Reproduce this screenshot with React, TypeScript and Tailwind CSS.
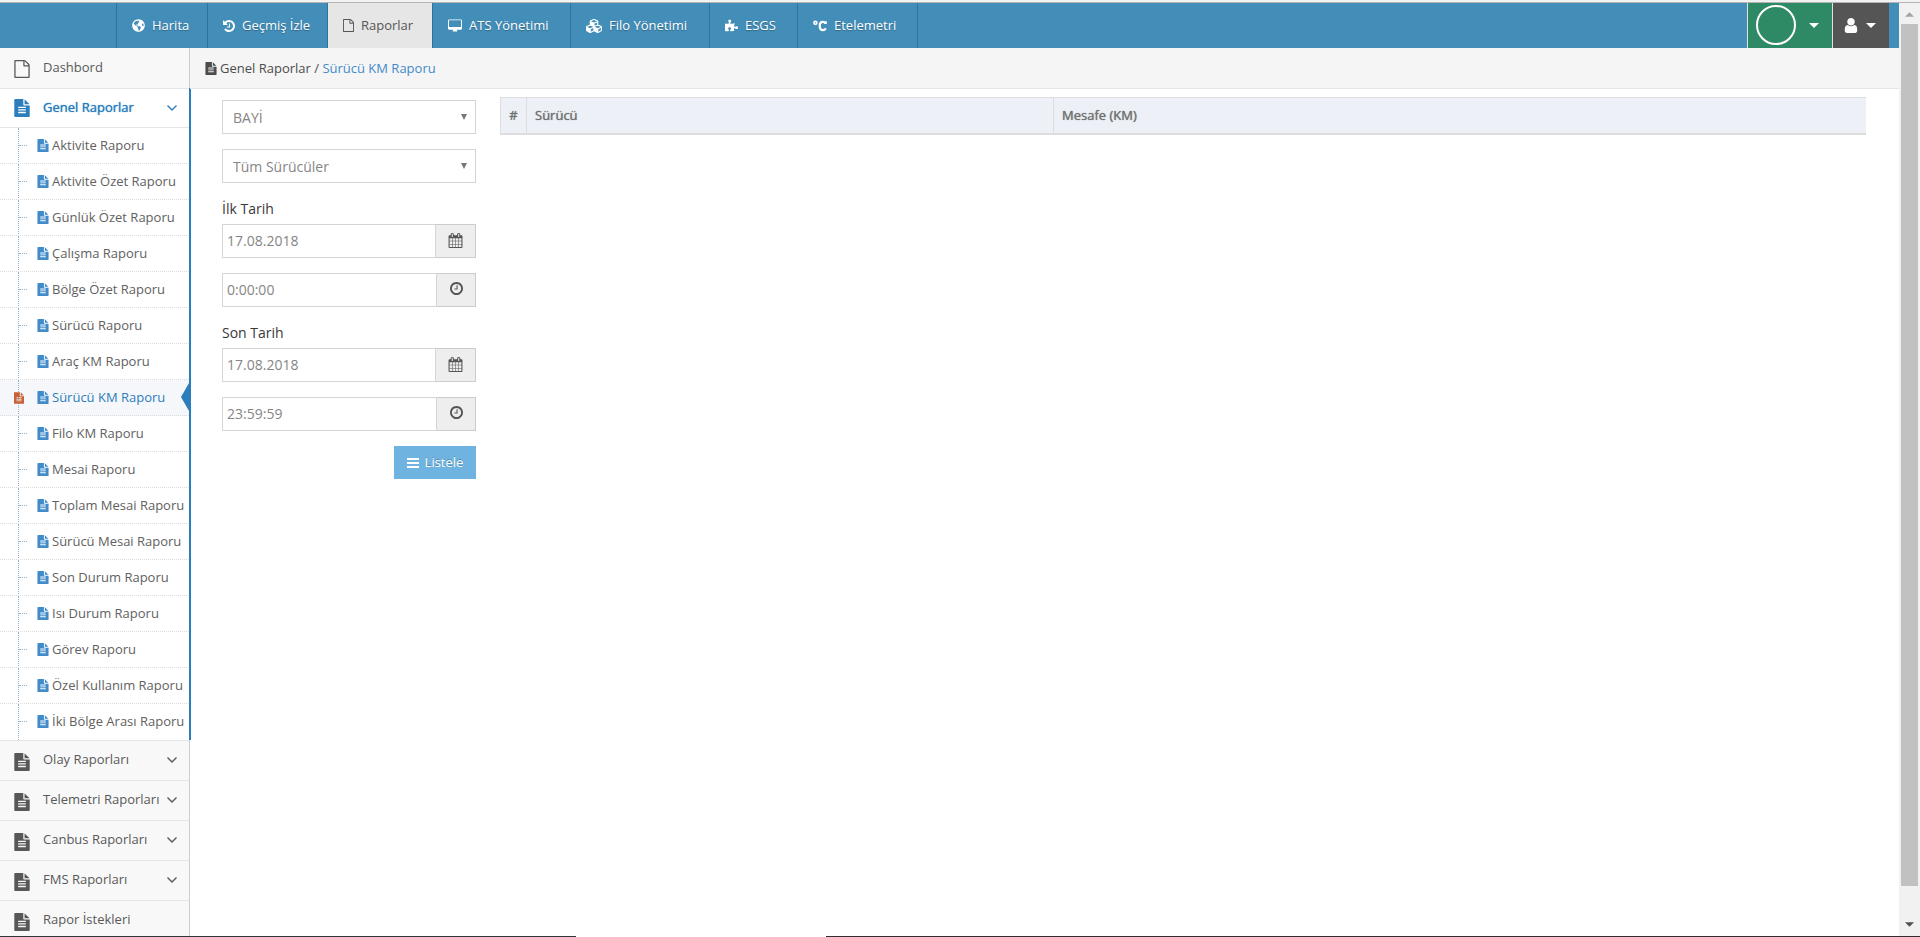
import React from 'react';
import { FaCubes, FaGlobeAmericas, FaPuzzlePiece } from 'react-icons/fa';

type IconProps = { className?: string };

function Glyph({ d, className, viewBox = '0 0 1792 1792' }: IconProps & { d: string; viewBox?: string }) {
  return (
    <svg viewBox={viewBox} fill="currentColor" aria-hidden="true" className={className}>
      <path d={d} />
    </svg>
  );
}

const FileText = ({ className }: IconProps) => (
  <Glyph
    className={className}
    viewBox="128 0 1536 1792"
    d="M1596 476q14 14 28 36h-472v-472q22 14 36 28zm-476 164h544v1056q0 40-28 68t-68 28h-1344q-40 0-68-28t-28-68v-1600q0-40 28-68t68-28h800v544q0 40 28 68t68 28zm160 736v-64q0-14-9-23t-23-9h-704q-14 0-23 9t-9 23v64q0 14 9 23t23 9h704q14 0 23-9t9-23zm0-256v-64q0-14-9-23t-23-9h-704q-14 0-23 9t-9 23v64q0 14 9 23t23 9h704q14 0 23-9t9-23zm0-256v-64q0-14-9-23t-23-9h-704q-14 0-23 9t-9 23v64q0 14 9 23t23 9h704q14 0 23-9t9-23z"
  />
);

const FileOutline = ({ className }: IconProps) => (
  <Glyph
    className={className}
    viewBox="128 0 1536 1792"
    d="M1596 380q28 28 48 76t20 88v1152q0 40-28 68t-68 28h-1344q-40 0-68-28t-28-68v-1600q0-40 28-68t68-28h896q40 0 88 20t76 48zm-444-244v376h376q-10-29-22-41l-313-313q-12-12-41-22zm384 1528v-1024h-416q-40 0-68-28t-28-68v-416h-768v1536h1280z"
  />
);

const History = ({ className }: IconProps) => (
  <Glyph
    className={className}
    viewBox="128 128 1536 1536"
    d="M1664 896q0 156-61 298t-164 245-245 164-298 61q-172 0-327-72.5t-264-204.5q-7-10-6.5-22.5t8.5-20.5l137-138q10-9 25-9 16 2 23 12 73 95 179 147t225 52q104 0 198.5-40.5t163.5-109.5 109.5-163.5 40.5-198.5-40.5-198.5-109.5-163.5-163.5-109.5-198.5-40.5q-98 0-188 35.5t-160 101.5l137 138q31 30 14 69-17 40-59 40h-448q-26 0-45-19t-19-45v-448q0-42 40-59 39-17 69 14l130 129q107-101 244.5-156.5t284.5-55.5q156 0 298 61t245 164 164 245 61 298zm-640-288v448q0 14-9 23t-23 9h-320q-14 0-23-9t-9-23v-64q0-14 9-23t23-9h224v-352q0-14 9-23t23-9h64q14 0 23 9t9 23z"
  />
);

const Desktop = ({ className }: IconProps) => (
  <Glyph
    className={className}
    viewBox="-64 0 1920 1664"
    d="M1728 992v-832q0-13-9.5-22.5t-22.5-9.5h-1600q-13 0-22.5 9.5t-9.5 22.5v832q0 13 9.5 22.5t22.5 9.5h1600q13 0 22.5-9.5t9.5-22.5zm128-832v1088q0 66-47 113t-113 47h-544q0 37 16 77.5t32 71 16 43.5q0 26-19 45t-45 19h-512q-26 0-45-19t-19-45q0-14 16-44t32-70 16-78h-544q-66 0-113-47t-47-113v-1088q0-66 47-113t113-47h1600q66 0 113 47t47 113z"
  />
);

const Calendar = ({ className }: IconProps) => (
  <Glyph
    className={className}
    d="M192 1664h288v-288h-288v288zm352 0h320v-288h-320v288zm-352-352h288v-320h-288v320zm352 0h320v-320h-320v320zm-352-384h288v-288h-288v288zm736 736h320v-288h-320v288zm-384-736h320v-288h-320v288zm768 736h288v-288h-288v288zm-384-352h320v-320h-320v320zm-352-864v-288q0-13-9.5-22.5t-22.5-9.5h-64q-13 0-22.5 9.5t-9.5 22.5v288q0 13 9.5 22.5t22.5 9.5h64q13 0 22.5-9.5t9.5-22.5zm736 864h288v-320h-288v320zm-384-384h320v-288h-320v288zm384 0h288v-288h-288v288zm32-480v-288q0-13-9.5-22.5t-22.5-9.5h-64q-13 0-22.5 9.5t-9.5 22.5v288q0 13 9.5 22.5t22.5 9.5h64q13 0 22.5-9.5t9.5-22.5zm384-64v1280q0 52-38 90t-90 38h-1408q-52 0-90-38t-38-90v-1280q0-52 38-90t90-38h128v-96q0-66 47-113t113-47h64q66 0 113 47t47 113v96h384v-96q0-66 47-113t113-47h64q66 0 113 47t47 113v96h128q52 0 90 38t38 90z"
  />
);

const Clock = ({ className }: IconProps) => (
  <Glyph
    className={className}
    viewBox="128 128 1536 1536"
    d="M1024 544v448q0 14-9 23t-23 9h-320q-14 0-23-9t-9-23v-64q0-14 9-23t23-9h224v-352q0-14 9-23t23-9h64q14 0 23 9t9 23zm416 352q0-148-73-273t-198-198-273-73-273 73-198 198-73 273 73 273 198 198 273 73 273-73 198-198 73-273zm224 0q0 209-103 385.5t-279.5 279.5-385.5 103-385.5-103-279.5-279.5-103-385.5 103-385.5 279.5-279.5 385.5-103 385.5 103 279.5 279.5 103 385.5z"
  />
);

const User = ({ className }: IconProps) => (
  <Glyph
    className={className}
    viewBox="256 128 1280 1536"
    d="M1536 1399q0 109-62.5 187t-150.5 78h-854q-88 0-150.5-78t-62.5-187q0-85 8.5-160.5t31.5-152 58.5-131 94-89 134.5-34.5q131 128 313 128t313-128q76 0 134.5 34.5t94 89 58.5 131 31.5 152 8.5 160.5zm-256-887q0 159-112.5 271.5t-271.5 112.5-271.5-112.5-112.5-271.5 112.5-271.5 271.5-112.5 271.5 112.5 112.5 271.5z"
  />
);

const Celsius = ({ className }: IconProps) => (
  <svg viewBox="0 0 15 12" fill="none" stroke="currentColor" aria-hidden="true" className={className}>
    <circle cx="2.6" cy="2.6" r="1.6" strokeWidth="1.8" />
    <path d="M13.600 3.800V1M13.400 3.600C13 2.200 12 1.600 10.600 1.600C8.400 1.600 7.200 3.200 7.200 6S8.400 10.400 10.600 10.400C12 10.400 13 9.800 13.800 8.600" strokeWidth="2.400" />
  </svg>
);

const Lines = ({ className }: IconProps) => (
  <Glyph className={className} viewBox="0 0 12 10" d="M0 0h12v2H0zM0 4h12v2H0zM0 8h12v2H0z" />
);

const Caret = ({ className }: IconProps) => <Glyph className={className} viewBox="0 0 10 5" d="M0 0h10L5 5z" />;

const ChevronDown = ({ className }: IconProps) => (
  <svg viewBox="0 0 10 6" fill="none" stroke="currentColor" strokeWidth="1.4" aria-hidden="true" className={className}>
    <path d="M.5.5 5 5 9.500.5" />
  </svg>
);

const tabs = [
  { label: 'Harita', icon: <FaGlobeAmericas className="size-[13px]" />, width: 'w-[91px]' },
  { label: 'Geçmiş İzle', icon: <History className="size-3" />, width: 'w-[120px]' },
  { label: 'Raporlar', icon: <FileOutline className="h-[13px] w-[11px]" />, width: 'w-[105px]', active: true },
  { label: 'ATS Yönetimi', icon: <Desktop className="h-[13px] w-[14px]" />, width: 'w-[138px]' },
  { label: 'Filo Yönetimi', icon: <FaCubes className="size-4" />, width: 'w-[139px]' },
  { label: 'ESGS', icon: <FaPuzzlePiece className="size-[13px]" />, width: 'w-[88px]' },
  { label: 'Etelemetri', icon: <Celsius className="h-3 w-[14px]" />, width: 'w-[120px]' },
];

const reports = [
  'Aktivite Raporu',
  'Aktivite Özet Raporu',
  'Günlük Özet Raporu',
  'Çalışma Raporu',
  'Bölge Özet Raporu',
  'Sürücü Raporu',
  'Araç KM Raporu',
  'Sürücü KM Raporu',
  'Filo KM Raporu',
  'Mesai Raporu',
  'Toplam Mesai Raporu',
  'Sürücü Mesai Raporu',
  'Son Durum Raporu',
  'Isı Durum Raporu',
  'Görev Raporu',
  'Özel Kullanım Raporu',
  'İki Bölge Arası Raporu',
];

const groups = [
  { label: 'Olay Raporları', expandable: true },
  { label: 'Telemetri Raporları', expandable: true },
  { label: 'Canbus Raporları', expandable: true },
  { label: 'FMS Raporları', expandable: true },
  { label: 'Rapor İstekleri', expandable: false },
];

function Header() {
  return (
    <header className="flex h-[45px] shrink-0 bg-[#438eb9] text-[13px] text-white">
      <nav className="ml-[116px] flex border-l border-[#2c7499]">
        {tabs.map((t) => (
          <a
            key={t.label}
            href="#"
            className={`flex shrink-0 items-center gap-[7px] border-r border-[#2c7499] pl-[15px] whitespace-nowrap ${t.width} ${
              t.active ? 'bg-[#e6e6e6] text-[#555]' : '[text-shadow:0_1px_1px_rgba(0,0,0,0.3)]'
            }`}
          >
            {t.icon}
            {t.label}
          </a>
        ))}
      </nav>
      <div className="mr-[10px] ml-auto flex">
        <button type="button" aria-label="Firma" className="flex w-[85px] items-center justify-between border-l border-[#e1e1e1] bg-[#2e8965] pr-[13px] pb-px pl-2">
          <span className="size-10 rounded-full border-2 border-white" />
          <Caret className="h-[5px] w-[10px]" />
        </button>
        <button type="button" aria-label="Kullanıcı" className="flex w-[57px] items-center justify-between border-l border-[#e1e1e1] bg-[#555] pr-[13px] pb-px pl-[11px]">
          <User className="h-[15px] w-[14px]" />
          <Caret className="h-[5px] w-[10px]" />
        </button>
      </div>
    </header>
  );
}

function Sidebar() {
  return (
    <aside className="w-[191px] shrink-0 overflow-hidden bg-white text-[13px] text-[#585858]">
      <a href="#" className="mr-px flex h-10 items-center border-r border-[#ccc] bg-[#f8f8f8] pb-px pl-[14px]">
        <FileOutline className="mt-[2px] h-[18px] w-4" />
        <span className="ml-[13px]">Dashbord</span>
      </a>
      <div className="border-r-2 border-[#2b7dbc]">
        <button type="button" className="flex h-10 w-full items-center border-y border-[#e5e5e5] pr-3 pl-[14px] text-[#2b7dbc]">
          <FileText className="h-[18px] w-4" />
          <span className="ml-[13px] [text-shadow:0_0_1px_currentColor]">Genel Raporlar</span>
          <ChevronDown className="ml-auto h-[6px] w-[10px]" />
        </button>
        <ul>
          {reports.map((r) => {
            const active = r === 'Sürücü KM Raporu';
            return (
              <li key={r} className={`group relative flex h-9 ${active ? 'bg-[#f5f7fa]' : ''}`}>
                <span className="ml-[18px] w-0 border-l border-dotted border-[#8fb3d0]" />
                {active ? (
                  <FileText className="absolute top-3 left-[14px] h-3 w-[10px] text-[#c86139]" />
                ) : (
                  <span className="mt-[17px] h-0 w-2 border-t border-dotted border-[#8fb3d0]" />
                )}
                <a
                  href="#"
                  className={`absolute inset-0 flex items-center gap-[3px] border-b border-dotted border-[#dcdcdc] pl-[37px] whitespace-nowrap group-last:border-transparent ${
                    active ? 'text-[#2b7dbc]' : 'text-[#616161]'
                  }`}
                >
                  <FileText className="h-[13px] w-3 shrink-0 text-[#428bca]" />
                  {r}
                </a>
                {active && (
                  <svg viewBox="0 0 8 28" className="absolute top-[3px] right-0 h-7 w-2 fill-[#2b7dbc]" aria-hidden="true">
                    <path d="M8 0v28L0 14z" />
                  </svg>
                )}
              </li>
            );
          })}
        </ul>
      </div>
      <div className="mr-px border-r border-[#ccc] bg-[#f8f8f8]">
        {groups.map((g) => (
          <button key={g.label} type="button" className="flex h-10 w-full items-center border-t border-[#e5e5e5] pr-3 pb-px pl-[14px]">
            <FileText className="mt-[3px] h-[18px] w-4" />
            <span className="ml-[13px]">{g.label}</span>
            {g.expandable && <ChevronDown className="ml-auto h-[6px] w-[10px]" />}
          </button>
        ))}
      </div>
    </aside>
  );
}

function SelectField({ label, value }: { label: string; value: string }) {
  return (
    <div className="relative mb-[15px]">
      <select aria-label={label} className="block h-[34px] w-full appearance-none border border-[#d5d5d5] bg-white px-[10px] pt-[2px] text-sm text-[#858585]">
        <option>{value}</option>
      </select>
      <Glyph viewBox="0 0 6 6" d="M0 0h6L3 6z" className="pointer-events-none absolute top-[14px] right-[9px] size-[6px] text-[#777]" />
    </div>
  );
}

type PickerProps = { id: string; label: string; value: string; kind: 'date' | 'time' };

function PickerField({ id, label, value, kind }: PickerProps) {
  return (
    <div className="mb-[15px] flex h-[34px]">
      <input id={id} aria-label={label} defaultValue={value} className="min-w-0 flex-1 border border-[#d5d5d5] px-1 text-sm text-[#858585]" />
      <button
        type="button"
        aria-label={kind === 'date' ? 'Takvim' : 'Saat'}
        className={`flex items-center justify-center border border-l-0 border-[#ccc] bg-[#eee] text-[#555] ${kind === 'date' ? 'w-10 pb-[2px]' : 'w-[39px] pb-[3px]'}`}
      >
        {kind === 'date' ? <Calendar className="size-[15px]" /> : <Clock className="size-[13px]" />}
      </button>
    </div>
  );
}

function Filters() {
  return (
    <form className="w-[254px] shrink-0 pt-[11px] text-sm text-[#393939]">
      <SelectField label="Bayi" value="BAYİ" />
      <SelectField label="Sürücü" value="Tüm Sürücüler" />
      <label htmlFor="start-date" className="block pt-px pb-[5px] leading-5">İlk Tarih</label>
      <PickerField id="start-date" label="İlk Tarih" value="17.08.2018" kind="date" />
      <PickerField id="start-time" label="İlk saat" value="0:00:00" kind="time" />
      <label htmlFor="end-date" className="block pt-px pb-[5px] leading-5">Son Tarih</label>
      <PickerField id="end-date" label="Son Tarih" value="17.08.2018" kind="date" />
      <PickerField id="end-time" label="Son saat" value="23:59:59" kind="time" />
      <button type="button" className="ml-auto flex h-[33px] w-[82px] items-center justify-center gap-[6px] bg-[#6fb3e0] text-[13px] text-white [text-shadow:0_-1px_0_rgba(0,0,0,0.25)]">
        <Lines className="h-[10px] w-3" />
        Listele
      </button>
    </form>
  );
}

function ReportTable() {
  return (
    <div className="min-w-0 flex-1 pt-2">
      <table className="w-full table-fixed border-collapse text-left text-[13px] text-[#707070]">
        <thead>
          <tr className="h-9 border-t border-b-2 border-[#ddd] bg-[#edf1f7] [text-shadow:0_0_1px_currentColor]">
            <th className="w-[26px] border-x border-[#ddd] text-center font-normal">#</th>
            <th className="w-[38.6%] border-r border-[#ddd] px-2 font-normal">Sürücü</th>
            <th className="px-2 font-normal">Mesafe (KM)</th>
          </tr>
        </thead>
        <tbody />
      </table>
    </div>
  );
}

function ScrollTrack() {
  return (
    <div className="flex w-[21px] shrink-0 flex-col items-center bg-[#f1f1f1]" aria-hidden="true">
      <Caret className="mt-[9px] h-[5px] w-[9px] shrink-0 rotate-180 text-[#a3a3a3]" />
      <div className="mt-[7px] mb-[36px] w-[17px] flex-1 bg-[#c1c1c1]" />
      <Caret className="mb-[9px] h-[5px] w-[9px] shrink-0 text-[#505050]" />
    </div>
  );
}

export default function App() {
  return (
    <div className="flex h-screen flex-col overflow-hidden bg-white font-['Open_Sans','Noto_Sans',sans-serif]">
      <div className="h-[3px] shrink-0 border-b border-[#b4b4b4] bg-[#f2f2f2]" />
      <div className="flex min-h-0 flex-1">
        <div className="flex min-w-0 flex-1 flex-col">
          <Header />
          <div className="flex min-h-0 flex-1">
            <Sidebar />
            <main className="min-w-0 flex-1">
              <div className="-ml-px flex h-[41px] items-center border-b border-[#e5e5e5] bg-[#f5f5f5] pt-px pl-[15px] text-[13px] text-[#4c4c4c]">
                <FileText className="mr-[3px] h-[13px] w-3" />
                <span>
                  Genel Raporlar /{' '}
                  <a href="#" className="text-[#428bca]">
                    Sürücü KM Raporu
                  </a>
                </span>
              </div>
              <div className="flex gap-6 pr-[33px] pl-[31px]">
                <Filters />
                <ReportTable />
              </div>
            </main>
          </div>
        </div>
        <ScrollTrack />
      </div>
      <div className="flex h-px shrink-0">
        <div className="w-[30%] bg-[#33333b]" />
        <div className="w-[13%]" />
        <div className="flex-1 bg-[#352c30]" />
      </div>
    </div>
  );
}
